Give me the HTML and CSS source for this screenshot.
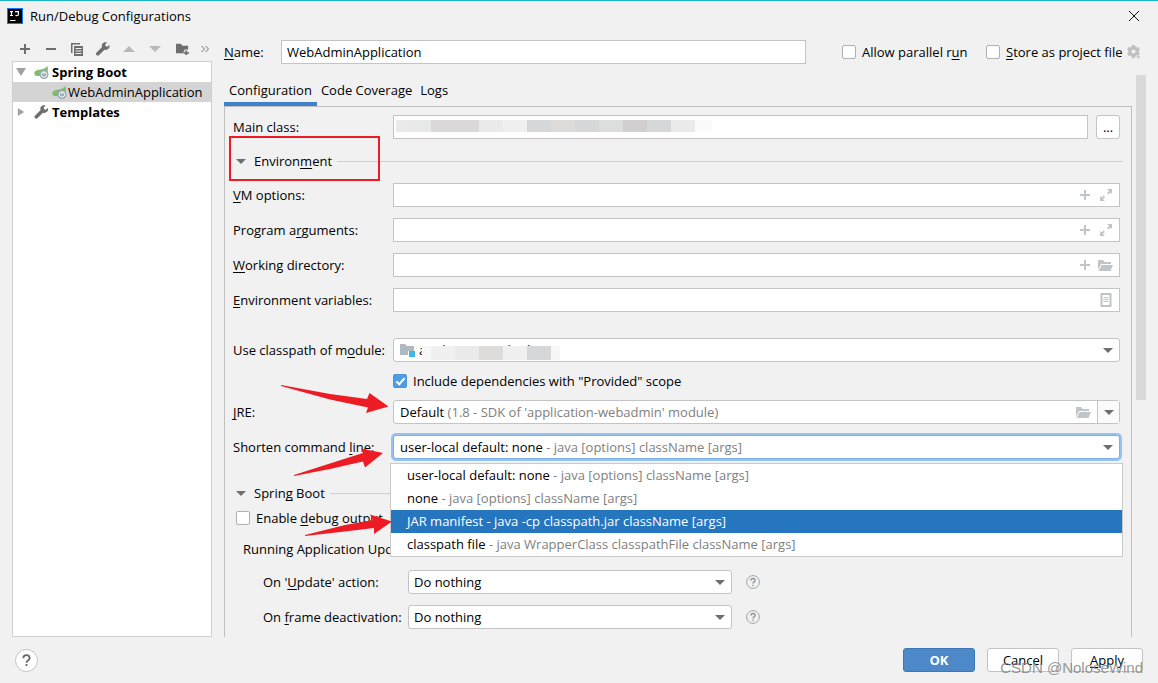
FILE: index.html
```html
<!DOCTYPE html>
<html lang="en">
<head>
<meta charset="utf-8">
<title>Run/Debug Configurations</title>
<link rel="stylesheet" href="styles.css">
</head>
<body>
<svg class="defs" aria-hidden="true">
  <symbol id="plus" viewBox="0 0 10 10"><path d="M4 0h2v4h4v2H6v4H4V6H0V4h4z"/></symbol>
  <symbol id="minus" viewBox="0 0 10 10"><path d="M0 4h10v2H0z"/></symbol>
  <symbol id="copy" viewBox="0 0 14 14"><path d="M1 1h9v1.500H2.500V11H1z"/><path fill-rule="evenodd" d="M4 4h9v10H4zM5.500 6v1h6V6zM5.500 8.500v1h6v-1zM5.500 11v1h6v-1z"/></symbol>
  <symbol id="wrench" viewBox="0 0 14 14"><path d="M13.400 3.100l-2.500 2-2-2L11 .600C9.300-.100 7.300.400 6.300 2c-.600 1-.600 2.100-.200 3.100L.600 10.600a1.700 1.700 0 0 0 0 2.500 1.700 1.700 0 0 0 2.500 0l5.400-5.400c1.300.500 3 .200 4-.900 1-.900 1.300-2.400.900-3.700z"/></symbol>
  <symbol id="up" viewBox="0 0 12 6"><path d="M6 0l6 6H0z"/></symbol>
  <symbol id="down" viewBox="0 0 12 6"><path d="M0 0h12L6 6z"/></symbol>
  <symbol id="newfolder" viewBox="0 0 15 13"><path d="M0 1h5l2 2h6v4h-4v2H8v2H0z"/><path d="M10 8h2v2h2v1.500h-2V13h-2v-1.500H8V10h2z"/></symbol>
  <symbol id="leaf" viewBox="0 0 15 14"><path fill="#7dbd6c" d="M13.500 1c.700 3 .500 5-1 7L7 11H2.500C0 10.500-.500 7.500 1.500 6c2.500-2 8-.500 12-5z"/><circle cx="10" cy="9.500" r="4.500" fill="#9aa7b0"/><circle cx="10" cy="9.500" r="2.700" fill="none" stroke="#fff"/><path stroke="#fff" d="M10 7v2.500"/></symbol>
  <symbol id="expand" viewBox="0 0 12 12"><path d="M7 0h5v5l-1.600-1.600-2 2-1.300-1.300 2-2zM5 12H0V7l1.600 1.600 2-2 1.300 1.300-2 2z"/></symbol>
  <symbol id="folder" viewBox="0 0 15 11"><path d="M0 0h5l1.500 2H13v2H3L0 10z"/><path d="M3.500 5H15l-2.500 6H.700z"/></symbol>
  <symbol id="list" viewBox="0 0 11 14"><path fill="none" stroke="currentColor" stroke-width="2" d="M1 1h9v12H1z"/><path stroke="currentColor" d="M3 4.500h5M3 6.500h5M3 8.500h5"/></symbol>
  <symbol id="gear" viewBox="0 0 14 14"><path fill-rule="evenodd" d="M5 0h3l.4 1.700 1.300.7L11.400 2l1.500 2.600-1.200 1.200v1.400l1.200 1.200-1.500 2.600-1.700-.5-1.300.8L8 13H5l-.4-1.700-1.300-.8-1.700.5L.1 8.400l1.200-1.200V5.800L.1 4.600 1.600 2l1.700.4 1.300-.7zM6.500 4.400a2.100 2.100 0 1 0 0 4.200 2.100 2.100 0 0 0 0-4.200z"/><path stroke="#f1f1f1" stroke-width=".6" d="M8.500 11H14l-2.700 3z"/></symbol>
  <symbol id="ask" viewBox="0 0 14 14"><circle cx="7" cy="7" r="6.400" fill="none" stroke="#9aa7b0"/><path fill="none" stroke="#8b979f" stroke-width="1.400" d="M5 5.500c0-2.600 4-2.600 4 0C9 7 7 6.800 7 8.600M7 9.700v1.400"/></symbol>
  <symbol id="fall" viewBox="0 0 108 28"><path d="M0 0l49 9 37 5 2.500-6 19 13.500L85 28l2-5.500-38-8L0 1z"/></symbol>
  <symbol id="rise" viewBox="0 0 90 28"><path d="M0 27l50-16 19-6L67 .5 89 5 71 19.500l-2-6L36 21 0 28z"/></symbol>
  <symbol id="point" viewBox="0 0 88 22"><path d="M0 21l40-10 28-5L65 .5l22 7L69 20v-6l-29 3.500L0 22z"/></symbol>
</svg>
<div class="dialog">
  <header class="titlebar">
    <svg class="logo" viewBox="0 0 16 16"><path fill="#087cfa" d="M0 0h16v16H0z"/><path d="M1 1h14v14H1z"/><path fill="none" stroke="#fff" stroke-width="1.200" d="M3 3.600h3M4.500 3v5M3 7.500h3M8 3.600h3.400v3c0 1-1.500 1.200-3 .9M3 12.500h5.500"/></svg>
    <h1>Run/Debug Configurations</h1>
    <button class="bare close" aria-label="Close"><svg viewBox="0 0 10 10"><path stroke="#111" d="M0 0l10 10M10 0L0 10"/></svg></button>
  </header>
  <div class="body">
    <aside class="side">
      <div class="toolbar">
        <button class="bare" aria-label="Add"><svg class="i10"><use href="#plus"/></svg></button>
        <button class="bare" aria-label="Remove"><svg class="i10"><use href="#minus"/></svg></button>
        <button class="bare" aria-label="Copy"><svg class="i14"><use href="#copy"/></svg></button>
        <button class="bare" aria-label="Edit templates"><svg class="i14"><use href="#wrench"/></svg></button>
        <button class="bare off" aria-label="Move up"><svg class="tri"><use href="#up"/></svg></button>
        <button class="bare off" aria-label="Move down"><svg class="tri"><use href="#down"/></svg></button>
        <button class="bare wide" aria-label="New folder"><svg class="i14"><use href="#newfolder"/></svg></button>
        <button class="bare more" aria-label="More"><svg viewBox="0 0 8 6"><path fill="none" stroke="#777" d="M.5 0l3 3-3 3M4.500 0l3 3-3 3"/></svg></button>
      </div>
      <ul class="tree">
        <li class="node"><svg class="twist" viewBox="0 0 10 8"><path d="M0 0h10L5 8z"/></svg><svg class="leaf"><use href="#leaf"/></svg><b>Spring Boot</b></li>
        <li class="node child selected"><svg class="leaf"><use href="#leaf"/></svg><span>WebAdminApplication</span></li>
        <li class="node"><svg class="twist" viewBox="0 0 10 10"><path d="M1 0l8 5-8 5z"/></svg><svg class="leaf dark"><use href="#wrench"/></svg><b>Templates</b></li>
      </ul>
    </aside>
    <main class="main">
      <div class="namerow">
        <label for="name"><u>N</u>ame:</label>
        <input class="box" id="name" value="WebAdminApplication">
        <label class="check parallel"><input type="checkbox"><span>Allow parallel r<u>u</u>n</span></label>
        <label class="check"><input type="checkbox"><span><u>S</u>tore as project file</span></label>
        <button class="bare gear" aria-label="Storage options"><svg class="i14"><use href="#gear"/></svg></button>
      </div>
      <nav class="tabs">
        <button class="tab active">Configuration</button>
        <button class="tab">Code Coverage</button>
        <button class="tab">Logs</button>
      </nav>
      <div class="scroll">
        <section class="panel">
          <div class="row">
            <label for="main">Main class:</label>
            <div class="pair">
              <div class="field"><input id="main">
                <div class="mosaic class-mosaic"><i class="c1 edge"></i><i class="c2"></i><i class="c5"></i><i class="c5"></i><i class="c1"></i><i></i><i class="c6"></i><i class="c4"></i><i class="c6"></i><i class="c3"></i><i class="c7"></i><i class="c6"></i><i class="c1"></i><i class="c0"></i></div>
              </div>
              <button class="btn dots">...</button>
            </div>
          </div>
          <div class="heading env"><svg class="twist open"><use href="#down"/></svg><h2>Environ<u>m</u>ent</h2><span class="rule"></span></div>
          <div class="row"><label for="vm"><u>V</u>M options:</label>
            <div class="field"><input id="vm"><button class="bare" aria-label="Insert macro"><svg class="i10"><use href="#plus"/></svg></button><button class="bare" aria-label="Expand"><svg class="i12"><use href="#expand"/></svg></button></div></div>
          <div class="row"><label for="args">Program a<u>r</u>guments:</label>
            <div class="field"><input id="args"><button class="bare" aria-label="Insert macro"><svg class="i10"><use href="#plus"/></svg></button><button class="bare" aria-label="Expand"><svg class="i12"><use href="#expand"/></svg></button></div></div>
          <div class="row"><label for="dir"><u>W</u>orking directory:</label>
            <div class="field"><input id="dir"><button class="bare" aria-label="Insert macro"><svg class="i10"><use href="#plus"/></svg></button><button class="bare" aria-label="Browse"><svg class="folder"><use href="#folder"/></svg></button></div></div>
          <div class="row"><label for="vars"><u>E</u>nvironment variables:</label>
            <div class="field"><input id="vars"><button class="bare" aria-label="Edit variables"><svg class="i14"><use href="#list"/></svg></button></div></div>
          <div class="row module"><label for="module">Use classpath of m<u>o</u>dule:</label>
            <div class="combo">
              <select id="module"><option>application-webadmin</option></select>
              <svg class="modicon" viewBox="0 0 15 14"><path fill="#aeb9c0" d="M0 1h5l2 2h7v5H8v4H0z"/><path fill="#40b6e0" d="M9 8h6v6H9z"/></svg>
              <div class="mosaic module-mosaic"><i class="edge"></i><i></i><i class="c1"></i><i class="c4"></i><i></i><i class="c6"></i><i class="edge"></i></div>
              <svg class="caret"><use href="#down"/></svg>
            </div></div>
          <div class="row"><label class="check provided"><input type="checkbox" checked><span>Include dependencies with "Provided" scope</span></label></div>
          <div class="row"><label for="jre"><u>J</u>RE:</label>
            <div class="combo jre">
              <button class="value" id="jre">Default <em>(1.8 - SDK of 'application-webadmin' module)</em></button>
              <button class="bare" aria-label="Browse"><svg class="folder"><use href="#folder"/></svg></button>
              <button class="bare drop" aria-label="Show list"><svg class="down"><use href="#down"/></svg></button>
              <svg class="arrow a1"><use href="#fall"/></svg>
            </div></div>
          <div class="row"><label for="shorten">Shorten command <u>l</u>ine:</label>
            <div class="combo focused">
              <button class="value" id="shorten" aria-haspopup="listbox" aria-expanded="true">user-local default: none <em>- java [options] className [args]</em></button>
              <svg class="caret"><use href="#down"/></svg>
              <ul class="popup" role="listbox">
                <li role="option">user-local default: none <em>- java [options] className [args]</em></li>
                <li role="option">none <em>- java [options] className [args]</em></li>
                <li role="option" class="picked" aria-selected="true">JAR manifest <em>- java -cp classpath.jar className [args]</em></li>
                <li role="option">classpath file <em>- java WrapperClass classpathFile className [args]</em></li>
              </ul>
              <svg class="arrow a2"><use href="#rise"/></svg>
              <svg class="arrow a3"><use href="#point"/></svg>
            </div></div>
          <div class="spring">
            <div class="heading"><svg class="twist open"><use href="#down"/></svg><h2>Sprin<u>g</u> Boot</h2><span class="rule"></span></div>
            <label class="check debug"><input type="checkbox"><span>Enable <u>d</u>ebug output</span></label>
            <h3>Running Application Update Policies</h3>
            <div class="policy"><label for="upd">On '<u>U</u>pdate' action:</label>
              <div class="combo"><select id="upd"><option>Do nothing</option></select><svg class="caret"><use href="#down"/></svg></div>
              <button class="bare" aria-label="Help"><svg class="i14"><use href="#ask"/></svg></button></div>
            <div class="policy"><label for="frame">On <u>f</u>rame deactivation:</label>
              <div class="combo"><select id="frame"><option>Do nothing</option></select><svg class="caret"><use href="#down"/></svg></div>
              <button class="bare" aria-label="Help"><svg class="i14"><use href="#ask"/></svg></button></div>
          </div>
        </section>
        <div class="thumb"></div>
      </div>
    </main>
  </div>
  <footer class="footer">
    <button class="help" aria-label="Help"><svg viewBox="0 0 10 14"><path fill="none" stroke="#666" stroke-width="2" d="M1.500 4.500c0-4.500 7-4.500 7 0C8.500 7 5 6.500 5 9.500M5 11v2"/></svg></button>
    <button class="btn ok">OK</button>
    <button class="btn">Cancel</button>
    <button class="btn"><u>A</u>pply</button>
    <span class="watermark">CSDN @NoloseWind</span>
  </footer>
</div>
</body>
</html>
```
FILE: styles.css
```css
*, ::before, ::after { box-sizing: border-box; }
body, h1, h2, h3, ul { margin: 0; padding: 0; }
body, button, input, select {
  font: 13px/16px "Open Sans", "Noto Sans CJK SC", sans-serif;
  color: #000;
}
h1, h2, h3 { font-size: 13px; font-weight: 400; }
ul { list-style: none; }
em { font-style: normal; color: #808080; }
svg { display: block; flex: none; fill: currentColor; }
u { text-underline-offset: 2px; text-decoration-skip-ink: none; }
.defs { position: absolute; width: 0; height: 0; }
.i10 { width: 10px; height: 10px; }
.i12 { width: 12px; height: 12px; }
.i14 { width: 14px; height: 14px; }

.dialog {
  display: flex;
  flex-direction: column;
  min-height: 100vh;
  background: #f1f1f1;
  border-top: 1px solid #1cb5c3;
}
.titlebar { display: flex; align-items: center; gap: 7px; height: 29px; padding: 0 19px 0 7px; }
.titlebar h1 { flex: 1; }
.logo { width: 16px; height: 16px; }
.close svg { width: 10px; height: 10px; }
.bare {
  display: flex;
  align-items: center;
  justify-content: center;
  padding: 0;
  border: 0;
  background: none;
  color: #6e6e6e;
}
.body { flex: 1; display: flex; gap: 12px; padding: 0 12px; }

.side { width: 200px; display: flex; flex-direction: column; }
.toolbar { display: flex; height: 31px; padding-top: 7px; }
.toolbar .bare { width: 26px; height: 24px; }
.toolbar .wide { width: 30px; }
.toolbar .more { width: 14px; }
.more svg { width: 8px; height: 6px; }
.tri { width: 12px; height: 6px; }
.off { color: #b9b9b9; }
.tree { flex: 1; background: #fff; border: 1px solid #d0d0d0; }
.node { display: flex; align-items: center; height: 20px; padding-left: 3px; gap: 3px; }
.child { padding-left: 39px; gap: 1px; }
.selected { background: #d4d4d4; }
.twist { width: 10px; height: 8px; margin-right: 5px; color: #a0a0a0; }
.leaf { width: 15px; height: 14px; }
.dark { color: #6e6e6e; }

.main { flex: 1; min-width: 0; display: flex; flex-direction: column; }
.namerow { display: flex; align-items: center; height: 44px; padding-right: 5px; }
.namerow > label:first-child { width: 57px; }
.box { flex: 1; min-width: 0; height: 24px; padding: 0 5px; border: 1px solid #c4c4c4; background: #fff; }
.check { display: flex; align-items: center; gap: 6px; white-space: nowrap; }
.check input {
  appearance: none;
  flex: none;
  width: 14px;
  height: 14px;
  margin: 0;
  border: 1px solid #b0b0b0;
  border-radius: 2px;
  background: #fff;
}
.check input:checked {
  border-color: #4a94dc;
  background: #4f9ee3;
  display: grid;
  place-items: center;
}
.check input:checked::after {
  content: "";
  width: 5px;
  height: 9px;
  margin-bottom: 2px;
  border: solid #fff;
  border-width: 0 2px 2px 0;
  transform: rotate(42deg);
}
.namerow .check { flex: none; width: 141px; }
.namerow .parallel { width: 144px; margin-left: 36px; }
.gear { color: #c0c0c0; }

.tabs { display: flex; height: 32px; }
.tab { padding: 3px 5px 0; border: 0; border-bottom: 4px solid transparent; background: none; }
.tab + .tab { padding: 3px 4px 0; }
.tab.active { border-color: #3d83c9; }
.scroll { flex: 1; display: flex; gap: 4px; }
.thumb { width: 10px; height: 325px; margin-top: -31px; background: #d9d9d9; }
.panel {
  flex: 1;
  min-width: 0;
  display: flex;
  flex-direction: column;
  gap: 11px;
  padding: 8px 11px 8px 8px;
  border: 1px solid #bfbfbf;
  border-bottom: 0;
}
.row { display: flex; align-items: center; }
.row > label:first-child:not(.check) { width: 160px; flex: none; }
.field, .pair { flex: 1; min-width: 0; display: flex; align-items: center; }
.pair { gap: 8px; }
.field { position: relative; height: 24px; background: #fff; border: 1px solid #c4c4c4; padding-right: 3px; }
.field input { flex: 1; min-width: 0; height: 100%; padding: 0 5px; border: 0; background: none; }
.field .bare { width: 21px; height: 20px; color: #bfc5c9; }
.folder { width: 15px; height: 11px; }
.mosaic { position: absolute; display: flex; height: 12px; }
.mosaic i { width: 24px; background: #f0f0f0; }
.mosaic .c0 { width: 17px; background: #fbfbfb; }
.mosaic .c1 { background: #eaeaea; }
.mosaic .c2 { background: #e6e9e8; }
.mosaic .c3 { background: #dbdedd; }
.mosaic .c4 { background: #dddcda; }
.mosaic .c5 { background: #dbd8d9; }
.mosaic .c6 { background: #d6d7d9; }
.mosaic .c7 { background: #d1cfd0; }
.mosaic .edge { width: 11px; }
.class-mosaic { left: 2px; top: 4px; }
.module-mosaic { left: 28px; top: 7px; height: 14px; }
.module-mosaic .edge { width: 9px; background: #f7f7f7; }
.btn {
  width: 72px;
  height: 24px;
  padding: 0;
  border: 1px solid #c4c4c4;
  border-radius: 3px;
  background: #fff;
}
.dots { width: 24px; }

.heading { display: flex; align-items: center; height: 22px; margin-right: -3px; padding-left: 3px; }
.twist.open { height: 5px; margin-right: 8px; color: #6e6e6e; }
.rule { flex: 1; height: 1px; margin-left: 5px; background: #cfcfcf; }
.env { position: relative; }
.env::before {
  content: "";
  position: absolute;
  left: -4px;
  top: -14px;
  width: 151px;
  height: 45px;
  border: 2px solid #ed1c24;
}

.combo {
  position: relative;
  flex: 1;
  min-width: 0;
  display: flex;
  align-items: center;
  height: 24px;
  border: 1px solid #c4c4c4;
  border-radius: 3px;
  background: #fff;
}
.combo select, .value {
  appearance: none;
  flex: 1;
  min-width: 0;
  height: 100%;
  padding: 0 6px;
  border: 0;
  background: none;
  text-align: left;
}
.caret { position: absolute; right: 6px; width: 10px; height: 5px; color: #6e6e6e; }
.down { width: 10px; height: 5px; }
.module { margin-top: 15px; }
.module .combo select { padding-left: 25px; }
.modicon { position: absolute; left: 6px; width: 15px; height: 14px; }
.provided { margin-left: 160px; }
.jre .bare { width: 27px; height: 100%; color: #bfc5c9; }
.jre .drop { width: 22px; border-left: 1px solid #c4c4c4; background: #fafafa; color: #6e6e6e; }
.focused { border-color: #7eb0e6; box-shadow: 0 0 0 2px #97c3f3; }
.popup {
  position: absolute;
  z-index: 1;
  left: -4px;
  right: -4px;
  top: 27px;
  background: #fff;
  border: 1px solid #c9c9c9;
}
.popup li { height: 23px; padding: 3px 16px; white-space: nowrap; }
.popup .picked, .picked em { background: #2675bf; color: #fff; }
.arrow { position: absolute; z-index: 2; color: #ed1c24; pointer-events: none; }
.a1 { left: -113px; top: -16px; width: 108px; height: 28px; }
.a2 { left: -100px; top: 12px; width: 90px; height: 28px; }
.a3 { left: -89px; top: 78px; width: 88px; height: 22px; }

.spring { margin-top: 12px; }
.debug { height: 16px; margin: 6px 3px 15px; }
.spring h3 { margin: 0 10px 13px; }
.policy { display: flex; align-items: center; margin: 0 0 11px 30px; }
.policy label { width: 145px; }
.policy .combo { flex: none; width: 324px; }
.policy select { padding: 0 5px; }
.policy .bare { margin-left: 14px; }
.policy:last-child { margin-bottom: 0; }

.footer { position: relative; display: flex; align-items: center; gap: 12px; height: 46px; padding: 0 15px; }
.help { width: 23px; height: 23px; margin-right: auto; padding: 4px 6px; border: 1px solid #c4c4c4; border-radius: 50%; background: #fff; }
.help svg { width: 9px; height: 13px; }
.ok { background: #4d89c9; border-color: #3c78b8; color: #fff; font-weight: 700; }
.watermark { position: absolute; right: 15px; top: 22px; font: 15px/18px "Liberation Sans", sans-serif; color: #808080; opacity: .8; }
```
